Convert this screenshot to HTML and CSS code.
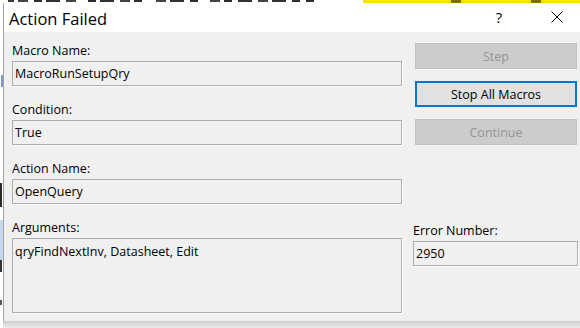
FILE: index.html
```html
<!DOCTYPE html>
<html>
<head>
<meta charset="utf-8">
<link rel="stylesheet" href="styles.css">
</head>
<body>
<div class="screen">
  <div class="topstrip">
    <div class="ts ts-w8"></div><div class="ts ts-d6"></div><div class="ts ts-w4"></div><div class="ts ts-d10"></div><div class="ts ts-w6"></div><div class="ts ts-d8"></div><div class="ts ts-w4"></div><div class="ts ts-d14"></div><div class="ts ts-w6"></div><div class="ts ts-d10"></div><div class="ts ts-w12"></div><div class="ts ts-d8"></div><div class="ts ts-w4"></div><div class="ts ts-d14"></div><div class="ts ts-w6"></div><div class="ts ts-d10"></div><div class="ts ts-w4"></div><div class="ts ts-d8"></div><div class="ts ts-w14"></div><div class="ts ts-d10"></div><div class="ts ts-w4"></div><div class="ts ts-d14"></div><div class="ts ts-w6"></div><div class="ts ts-d8"></div><div class="ts ts-w12"></div><div class="ts ts-d10"></div><div class="ts ts-w4"></div><div class="ts ts-d8"></div><div class="ts ts-w6"></div><div class="ts ts-d14"></div><div class="ts ts-w6"></div><div class="ts ts-d10"></div><div class="ts ts-w4"></div><div class="ts ts-d14"></div><div class="ts ts-w6"></div><div class="ts ts-d8"></div><div class="ts ts-w6"></div><div class="ts ts-d8"></div><div class="ts ts-gap"></div><div class="ts yel yel-1"></div><div class="ts yel-dark"></div><div class="ts yel yel-2"></div><div class="ts yel-dark"></div><div class="ts yel yel-3"></div>
  </div>
  <div class="mid">
    <div class="leftstrip">
      <div class="ls ls-1"></div><div class="ls ls-2"></div><div class="ls ls-3"></div><div class="ls ls-4"></div><div class="ls ls-5"></div><div class="ls ls-6"></div><div class="ls ls-7"></div><div class="ls ls-8"></div><div class="ls ls-9"></div>
    </div>
    <div class="dialogwrap">
      <div class="dialog">
        <div class="titlebar">
          <span class="title">Action Failed</span>
          <span class="tbtn help">?</span>
          <span class="tbtn close">
            <svg width="12" height="12" viewBox="0 0 12 12"><path d="M0.5 0.5 L11.5 11.5 M11.5 0.5 L0.5 11.5" stroke="#000" stroke-width="1" fill="none"/></svg>
          </span>
        </div>
        <div class="body">
          <div class="leftcol">
            <div class="field">
              <div class="label">Macro Name:</div>
              <div class="box">MacroRunSetupQry</div>
            </div>
            <div class="field">
              <div class="label">Condition:</div>
              <div class="box">True</div>
            </div>
            <div class="field">
              <div class="label">Action Name:</div>
              <div class="box">OpenQuery</div>
            </div>
            <div class="field">
              <div class="label">Arguments:</div>
              <div class="box box-multi">qryFindNextInv, Datasheet, Edit</div>
            </div>
          </div>
          <div class="rightcol">
            <div class="btn disabled">Step</div>
            <div class="btn default">Stop All Macros</div>
            <div class="btn disabled">Continue</div>
            <div class="field errfield">
              <div class="label">Error Number:</div>
              <div class="box">2950</div>
            </div>
          </div>
        </div>
      </div>
      <div class="shadow"></div>
    </div>
  </div>
</div>
</body>
</html>
```

FILE: styles.css
```css
html, body {
  margin: 0;
  padding: 0;
  background: #fff;
}

.screen {
  width: 580px;
  height: 328px;
  overflow: hidden;
  background: #fff;
  display: flex;
  flex-direction: column;
  font-family: "Open Sans", "Noto Sans", sans-serif;
  color: #000;
}

/* background fragments behind the dialog */
.topstrip {
  height: 3px;
  flex: none;
  display: flex;
  align-items: flex-start;
}
.ts { height: 2px; flex: none; background: #fff; }
.ts-w4 { width: 4px; }
.ts-w6 { width: 6px; }
.ts-w8 { width: 8px; }
.ts-w12 { width: 12px; }
.ts-w14 { width: 14px; }
.ts-gap { width: 49px; }
.ts-d6 { width: 6px; background: #3a3a3a; }
.ts-d8 { width: 8px; background: #2e2e2e; }
.ts-d10 { width: 10px; background: #444; }
.ts-d14 { width: 14px; background: #333; }
.yel { height: 3px; background: #f4e400; }
.yel-1 { width: 88px; }
.yel-2 { width: 70px; }
.yel-3 { flex: 1; }
.yel-dark { height: 3px; width: 10px; background: #7a7000; }

.mid {
  flex: 1;
  display: flex;
  min-height: 0;
}

.leftstrip {
  width: 3px;
  flex: none;
  display: flex;
  flex-direction: column;
}
.ls { width: 3px; background: #fff; flex: none; }
.ls-1 { height: 72px; }
.ls-2 { height: 12px; background: #7b9bc8; width: 2px; margin-left: 1px; }
.ls-3 { height: 96px; }
.ls-4 { height: 24px; background: #2a2a2a; width: 2px; }
.ls-5 { height: 13px; }
.ls-6 { height: 40px; background: #c6d6ec; }
.ls-7 { height: 12px; background: #333; width: 2px; }
.ls-8 { height: 28px; }
.ls-9 { height: 5px; background: #555; width: 2px; }

.dialogwrap {
  flex: 1;
  display: flex;
  flex-direction: column;
  min-width: 0;
}

.dialog {
  height: 318px;
  flex: none;
  box-sizing: border-box;
  border-left: 1px solid #a3a3a3;
  background: #f0f0f0;
  display: flex;
  flex-direction: column;
}

.shadow {
  flex: 1;
  background: linear-gradient(#cdcdcd, #ebebeb);
}

.titlebar {
  height: 29px;
  flex: none;
  box-sizing: border-box;
  background: #fff;
  display: flex;
  align-items: center;
  padding-left: 5px;
  padding-top: 2px;
}
.title {
  flex: 1;
  font-size: 16.5px;
  line-height: 22px;
  color: #000;
}
.tbtn {
  width: 46px;
  height: 27px;
  display: flex;
  align-items: center;
  justify-content: center;
}
.help {
  font-size: 15px;
  margin-right: 12px;
  margin-top: -3px;
}
.close {
  margin-top: -3px;
}

.body {
  flex: 1;
  display: flex;
  gap: 13px;
  padding: 11px 0 0 8px;
  font-size: 12.5px;
}

.leftcol {
  width: 390px;
  flex: none;
  display: flex;
  flex-direction: column;
  gap: 16px;
}

.field {
  display: flex;
  flex-direction: column;
}

.label {
  line-height: 16px;
  height: 16px;
  margin-bottom: 2px;
  white-space: nowrap;
}

.box {
  height: 25px;
  box-sizing: border-box;
  border: 1px solid #adadad;
  box-shadow: 1px 1px 0 #fcfcfc;
  background: #f0f0f0;
  padding: 0 2px;
  line-height: 23px;
  white-space: nowrap;
}
.box-multi {
  height: 75px;
  line-height: 16px;
  padding-top: 5px;
}

.rightcol {
  width: 162px;
  flex: none;
  display: flex;
  flex-direction: column;
  gap: 12px;
}

.btn {
  height: 26px;
  box-sizing: border-box;
  display: flex;
  align-items: center;
  justify-content: center;
  white-space: nowrap;
}
.btn.disabled {
  background: #cccccc;
  border: 1px solid #c2c2c2;
  color: #949494;
}
.btn.default {
  background: #e1e1e1;
  border: 2px solid #0078d7;
  color: #000;
}

.errfield {
  margin-top: 66px;
  margin-left: -2px;
  width: 165px;
}
```
